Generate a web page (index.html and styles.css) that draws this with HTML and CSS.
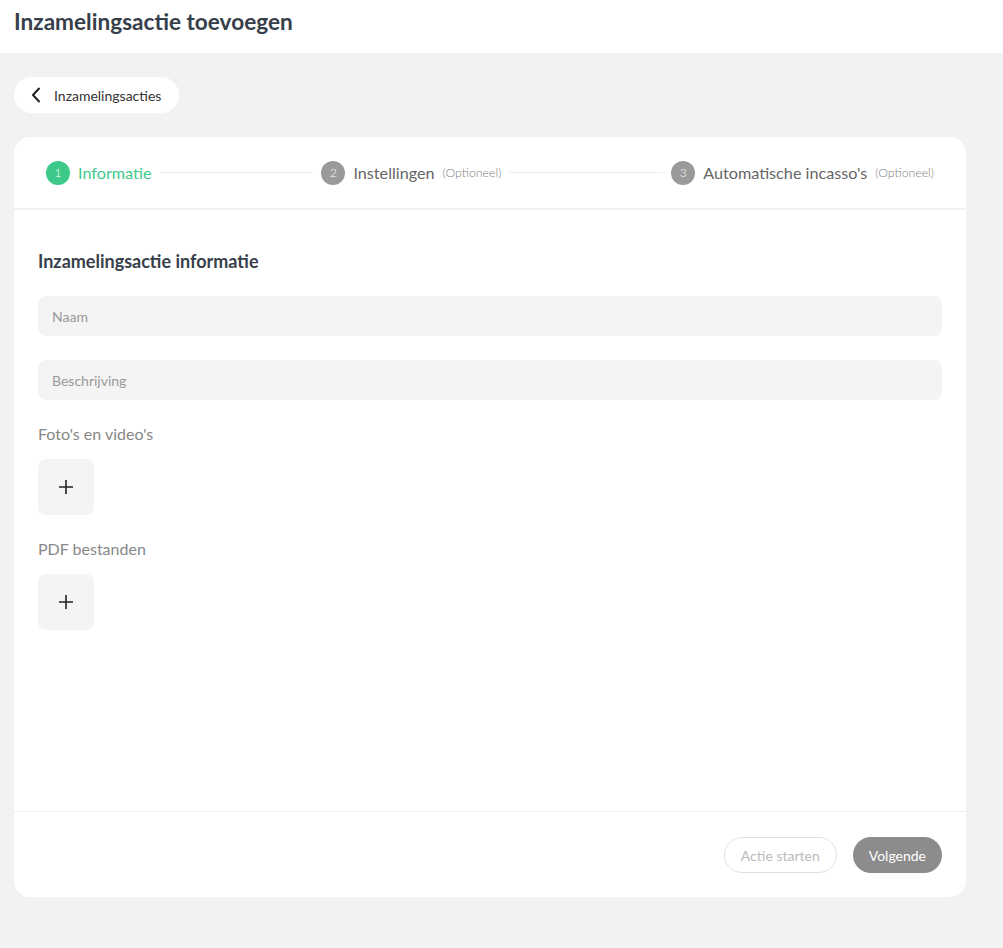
FILE: index.html
```html
<!DOCTYPE html>
<html>
<head>
    <title>Inzamelingsactie toevoegen</title>
    <link rel="stylesheet" href="styles.css">
</head>
<body>
    <header class="page-header">
        <h1>Inzamelingsactie toevoegen</h1>
    </header>

    <main class="page-body">
        <button class="back-btn">
            <svg width="10" height="16" viewBox="0 0 10 16"><path d="M8 1.5 2 8l6 6.5" fill="none" stroke="#222" stroke-width="2" stroke-linecap="round" stroke-linejoin="round"/></svg>
            <span>Inzamelingsacties</span>
        </button>

        <div class="card">
            <div class="stepper">
                <div class="step active">
                    <span class="step-num">1</span>
                    <span class="step-title">Informatie</span>
                </div>
                <div class="step-line"></div>
                <div class="step">
                    <span class="step-num">2</span>
                    <span class="step-title">Instellingen</span>
                    <span class="step-note">(Optioneel)</span>
                </div>
                <div class="step-line"></div>
                <div class="step">
                    <span class="step-num">3</span>
                    <span class="step-title">Automatische incasso's</span>
                    <span class="step-note">(Optioneel)</span>
                </div>
            </div>

            <div class="card-content">
                <h2>Inzamelingsactie informatie</h2>
                <input class="field" type="text" placeholder="Naam">
                <input class="field" type="text" placeholder="Beschrijving">

                <p class="upload-label">Foto's en video's</p>
                <button class="upload-box">
                    <svg width="16" height="16" viewBox="0 0 16 16"><path d="M8 1v14M1 8h14" stroke="#222" stroke-width="1.6"/></svg>
                </button>

                <p class="upload-label">PDF bestanden</p>
                <button class="upload-box">
                    <svg width="16" height="16" viewBox="0 0 16 16"><path d="M8 1v14M1 8h14" stroke="#222" stroke-width="1.6"/></svg>
                </button>
            </div>

            <div class="card-footer">
                <button class="btn btn-outline">Actie starten</button>
                <button class="btn btn-filled">Volgende</button>
            </div>
        </div>
    </main>
</body>
</html>
```

FILE: styles.css
```css
body {
    font-family: Lato, "Open Sans", sans-serif;
    margin: 0;
    background-color: #f2f2f2;
    color: #37404a;
}

button,
input {
    font-family: inherit;
}

.page-header {
    background-color: #fff;
    height: 53px;
    padding: 0 14px;
    box-sizing: border-box;
}

.page-header h1 {
    margin: 0;
    font-size: 22.6px;
    line-height: 44px;
    font-weight: 700;
    color: #37404a;
}

.page-body {
    padding: 24px 37px 51px 14px;
}

.back-btn {
    display: flex;
    align-items: center;
    gap: 13px;
    height: 36px;
    width: 165px;
    padding: 0 0 0 17px;
    background-color: #fff;
    border: none;
    border-radius: 18px;
    font-size: 14px;
    color: #333;
    cursor: pointer;
}

.card {
    margin-top: 24px;
    height: 760px;
    background-color: #fff;
    border-radius: 16px;
    display: flex;
    flex-direction: column;
}

.stepper {
    display: flex;
    align-items: center;
    gap: 8px;
    height: 71px;
    padding: 0 32px;
    border-bottom: 2px solid #f2f2f2;
}

.step {
    display: flex;
    align-items: center;
    gap: 8px;
    font-size: 16.2px;
    color: #666;
}

.step-num {
    width: 24px;
    height: 24px;
    border-radius: 50%;
    background-color: #9a9a9a;
    color: #fff;
    font-size: 12px;
    font-weight: 300;
    display: flex;
    align-items: center;
    justify-content: center;
}

.step.active {
    color: #3ec98a;
}

.step.active .step-num {
    background-color: #3ec98a;
}

.step-note {
    font-size: 12.3px;
    font-weight: 300;
    color: #808080;
}

.step-line {
    flex: 1;
    height: 1px;
    background-color: #eeeeee;
}

.card-content {
    flex: 1;
    padding: 39px 24px 0 24px;
    border-bottom: 1px solid #efefef;
}

.card-content h2 {
    margin: 0 0 23px 0;
    font-size: 18px;
    line-height: 24px;
    font-weight: 700;
    color: #37404a;
}

.field {
    display: block;
    width: 100%;
    box-sizing: border-box;
    height: 40px;
    margin-bottom: 24px;
    padding: 0 14px;
    border: none;
    border-radius: 8px;
    background-color: #f4f4f4;
    font-size: 14px;
    color: #333;
}

.field::placeholder {
    color: #999;
}

.upload-label {
    margin: 0 0 15px 0;
    font-size: 16px;
    line-height: 20px;
    color: #888;
}

.upload-box {
    display: flex;
    align-items: center;
    justify-content: center;
    width: 56px;
    height: 56px;
    margin-bottom: 24px;
    padding: 0;
    border: none;
    border-radius: 8px;
    background-color: #f4f4f4;
    cursor: pointer;
}

.card-footer {
    display: flex;
    justify-content: flex-end;
    gap: 16px;
    padding: 25px 24px 24px;
}

.btn {
    height: 36px;
    padding: 0 16px;
    border-radius: 18px;
    font-size: 14px;
    cursor: pointer;
}

.btn-outline {
    background-color: #fff;
    border: 1px solid #e0e0e0;
    color: #bbb;
}

.btn-filled {
    background-color: #8c8c8c;
    border: none;
    color: #fff;
}
```
